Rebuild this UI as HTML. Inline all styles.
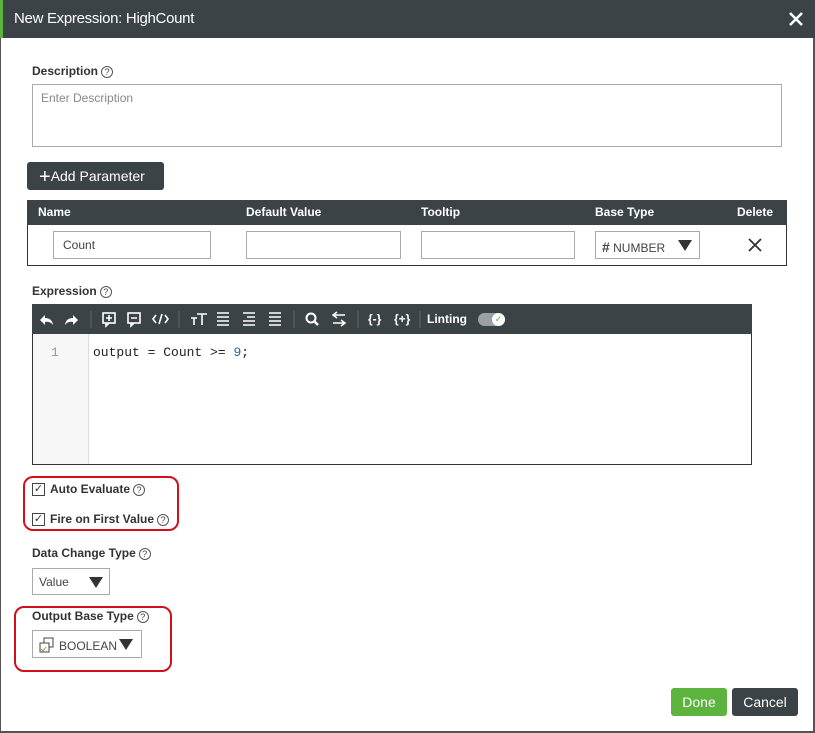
<!DOCTYPE html>
<html><head><style>
*{box-sizing:border-box;margin:0;padding:0}
body{width:815px;height:733px;background:#fff;font-family:"Liberation Sans",sans-serif;position:relative;overflow:hidden;color:#333}
.a{position:absolute}
.lbl{font-size:12px;font-weight:bold;color:#333}
.q{display:inline-block;width:12px;height:12px;border:1px solid #555;border-radius:50%;font-size:9px;text-align:center;line-height:10px;font-weight:normal;color:#444;vertical-align:middle;margin-left:3px}
.inp{border:1px solid #aaa;background:#fff;font-size:12px;color:#444}
.tri{position:absolute;width:0;height:0;border-left:7px solid transparent;border-right:7px solid transparent;border-top:11px solid #333}
</style></head><body>
<div class="a" style="left:0;top:0;width:815px;height:733px;border:1px solid #555;border-top:none;border-right:2px solid #555;border-bottom:2px solid #555"></div>
<div class="a" style="left:0;top:0;width:815px;height:38px;background:#3c4346;border-left:3px solid #5cb33e"></div>
<div class="a" style="left:14px;top:10px;color:#fff;font-size:15px;letter-spacing:-0.3px">New Expression: HighCount</div>
<svg class="a" style="left:788px;top:11px" width="16" height="16"><path d="M2 2L14 14M14 2L2 14" stroke="#fff" stroke-width="2.5"/></svg>

<div class="a lbl" style="left:32px;top:64px">Description<span class="q">?</span></div>
<div class="a inp" style="left:32px;top:84px;width:750px;height:63px;padding:6px 8px;color:#888">Enter Description</div>

<div class="a" style="left:27px;top:162px;width:137px;height:28px;background:#3c4346;border-radius:3px;color:#fff;font-size:14px;line-height:28px;padding-left:12px"><span style="font-size:20px;vertical-align:-2px">+</span>Add Parameter</div>

<div class="a" style="left:27px;top:200px;width:760px;height:66px;border:1px solid #333"></div>
<div class="a" style="left:27px;top:200px;width:760px;height:25px;background:#3c4346;color:#fff;font-size:12px;font-weight:bold;line-height:25px">
<span class="a" style="left:11px">Name</span><span class="a" style="left:219px">Default Value</span><span class="a" style="left:394px">Tooltip</span><span class="a" style="left:568px">Base Type</span><span class="a" style="left:710px">Delete</span></div>
<div class="a inp" style="left:53px;top:231px;width:158px;height:28px;padding:6px 9px">Count</div>
<div class="a inp" style="left:246px;top:231px;width:155px;height:28px"></div>
<div class="a inp" style="left:421px;top:231px;width:154px;height:28px"></div>
<div class="a inp" style="left:595px;top:231px;width:105px;height:28px;padding:7px 6px;font-size:12px"><b style="font-size:14px">#</b> NUMBER<span class="tri" style="left:82px;top:8px"></span></div>
<svg class="a" style="left:748px;top:238px" width="14" height="14"><path d="M1 1L13 13M13 1L1 13" stroke="#333" stroke-width="1.8"/></svg>

<div class="a lbl" style="left:32px;top:284px">Expression<span class="q">?</span></div>
<div class="a" style="left:32px;top:304px;width:720px;height:161px;border:1px solid #333"></div>
<div class="a" style="left:32px;top:304px;width:720px;height:30px;background:#3c4346">
<svg class="a" style="left:0;top:0" width="720" height="30" fill="none" stroke="#fff" stroke-width="1.6">
<path d="M8 16 L13 11 L13 14 Q20 14 21 21 Q18 17 13 18 L13 21 Z" fill="#fff" stroke="none"/>
<path d="M46 16 L41 11 L41 14 Q34 14 33 21 Q36 17 41 18 L41 21 Z" fill="#fff" stroke="none"/>
<path d="M59 7V24M147 7V24M262 7V24M326 7V24M388 7V24" stroke="#666" stroke-width="1"/>
<rect x="71" y="9" width="12" height="10"/><path d="M77 11V17M74 14H80M74 19V22L77 19"/>
<rect x="96" y="9" width="12" height="10"/><path d="M99 14H105M99 19V22L102 19"/>
<path d="M124 11L121 15L124 19M133 11L136 15L133 19M130 10L127 20"/>
<path d="M159 14H165M162 14V21M165 10H175M170 10V21"/>
<path d="M185 9H197M185 13H197M185 17H197M185 21H197" stroke-width="1.4"/>
<path d="M211 9H223M215 13H223M211 17H223M211 21H223" stroke-width="1.4"/>
<path d="M237 9H249M237 13H249M237 17H249M237 21H249" stroke-width="1.6"/>
<circle cx="279" cy="14" r="4.5" stroke-width="2"/><path d="M282 17L286 21" stroke-width="2.5"/>
<path d="M301 11H313M301 19H313M305 8L301 11L305 14M309 16L313 19L309 22" stroke-width="1.5"/>
</svg>
<span class="a" style="left:336px;top:8px;color:#fff;font-size:12px;font-weight:bold">{-}</span><span class="a" style="left:362px;top:8px;color:#fff;font-size:12px;font-weight:bold">{+}</span>
<span class="a" style="left:395px;top:8px;color:#fff;font-size:12px;font-weight:bold">Linting</span>
<span class="a" style="left:446px;top:9px;width:27px;height:13px;border-radius:7px;background:#9aa0a3"></span>
<span class="a" style="left:460px;top:9px;width:13px;height:13px;border-radius:50%;background:#fff;color:#5cb33e;font-size:9px;text-align:center;line-height:13px">✓</span>
</div>
<div class="a" style="left:33px;top:334px;width:56px;height:130px;background:#f7f7f7;border-right:1px solid #ddd"></div>
<div class="a" style="left:51px;top:345px;font-family:'Liberation Mono',monospace;font-size:13px;color:#999">1</div>
<div class="a" style="left:93px;top:345px;font-family:'Liberation Mono',monospace;font-size:13px;color:#222">output = Count &gt;= <span style="color:#2a6496">9</span>;</div>

<div class="a" style="left:23px;top:476px;width:156px;height:55px;border:2px solid #d0101a;border-radius:10px"></div>
<div class="a" style="left:32px;top:483px;width:13px;height:13px;border:1px solid #444;font-size:11px;line-height:11px;text-align:center">✓</div>
<div class="a lbl" style="left:50px;top:482px">Auto Evaluate<span class="q">?</span></div>
<div class="a" style="left:32px;top:513px;width:13px;height:13px;border:1px solid #444;font-size:11px;line-height:11px;text-align:center">✓</div>
<div class="a lbl" style="left:50px;top:512px">Fire on First Value<span class="q">?</span></div>

<div class="a lbl" style="left:32px;top:546px">Data Change Type<span class="q">?</span></div>
<div class="a inp" style="left:32px;top:568px;width:78px;height:27px;padding:6px 6px">Value<span class="tri" style="left:56px;top:8px"></span></div>

<div class="a" style="left:14px;top:606px;width:158px;height:66px;border:2px solid #d0101a;border-radius:10px"></div>
<div class="a lbl" style="left:32px;top:609px">Output Base Type<span class="q">?</span></div>
<div class="a inp" style="left:32px;top:630px;width:110px;height:28px;padding:8px 0 0 26px">BOOLEAN<span class="tri" style="left:86px;top:8px"></span></div>
<svg class="a" style="left:38px;top:637px" width="18" height="18"><rect x="6" y="1" width="9" height="9" fill="none" stroke="#444"/><rect x="2" y="6" width="9" height="9" fill="#fff" stroke="#444"/><path d="M3 12l2 2 3-4" stroke="#5cb33e" fill="none"/></svg>

<div class="a" style="left:671px;top:688px;width:56px;height:28px;background:#5cb33e;border-radius:3px;color:#fff;font-size:14px;text-align:center;line-height:28px">Done</div>
<div class="a" style="left:732px;top:688px;width:66px;height:28px;background:#3c4346;border-radius:3px;color:#fff;font-size:14px;text-align:center;line-height:28px">Cancel</div>
</body></html>
